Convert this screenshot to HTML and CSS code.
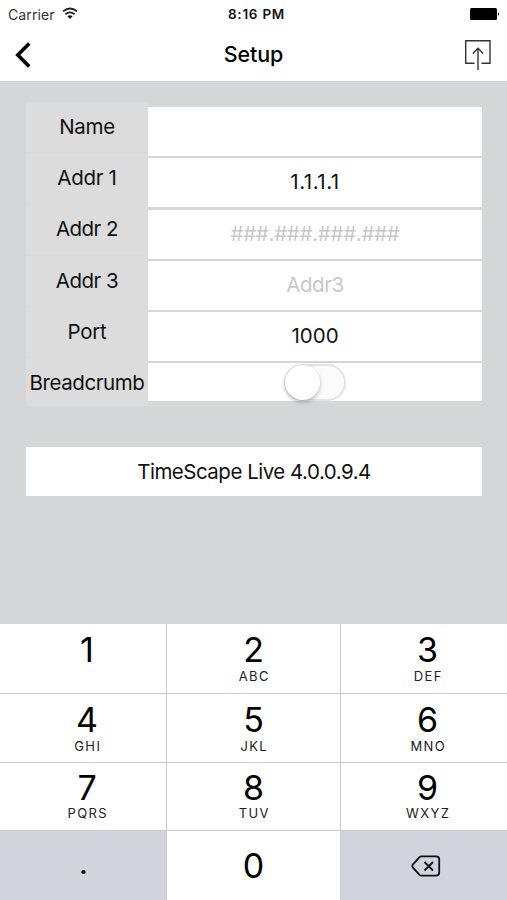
FILE: index.html
```html
<!DOCTYPE html>
<html lang="en">
<head>
<meta charset="utf-8">
<title>Setup</title>
<link rel="stylesheet" href="styles.css">
</head>
<body>
<div class="screen">
  <header class="top">
    <div class="status">
      <div class="carrier"><span>Carrier</span>
        <svg class="wifi" width="16" height="13" viewBox="0 0 16 13" fill="none" stroke="#222" stroke-width="1.8"><path d="M1 4.4Q8-1.4 15 4.4"/><path d="M3.4 7.3Q8 3.5 12.6 7.3"/><path d="M5.4 9.3Q8 7.3 10.6 9.3L8 12Z" fill="#111" stroke="none"/></svg>
      </div>
      <span class="time">8:16 PM</span>
      <svg class="battery" width="30" height="12" viewBox="0 0 30 12"><rect width="27" height="12" rx="1.5"/><path d="M28 4q2 2 0 4z"/></svg>
    </div>
    <nav class="nav">
      <svg class="back" width="16" height="26" viewBox="0 0 16 26" fill="none" stroke="#000" stroke-width="3.6"><path d="M14.2 1.5L2.8 13L14.2 24.5"/></svg>
      <h1>Setup</h1>
      <svg class="share" width="28" height="32" viewBox="0 0 28 32" fill="none" stroke="#333" stroke-width="1.4"><path d="M10.5 24.2H1.7V1.7H26V24.2H17.5"/><path d="M14 31V9M8.8 14.5L14 9.3L19.2 14.5"/></svg>
    </nav>
  </header>
  <main class="content">
    <div class="form">
      <div class="labels">
        <label>Name</label><label>Addr 1</label><label class="tight">Addr 2</label><label class="tight">Addr 3</label><label>Port</label><label class="wide">Breadcrumb</label>
      </div>
      <div class="fields">
        <div class="field"></div>
        <div class="field"><span class="ip">1.1.1.1</span></div>
        <div class="field hint"><span class="mask">###.###.###.###</span></div>
        <div class="field hint"><span class="addr">Addr3</span></div>
        <div class="field"><span class="port">1000</span></div>
        <div class="field last"><span class="switch"><span class="knob"></span></span></div>
      </div>
    </div>
    <div class="version"><span>TimeScape Live 4.0.0.9.4</span></div>
  </main>
  <div class="keypad">
    <div class="key left"><b>1</b></div>
    <div class="key"><b>2</b><small>ABC</small></div>
    <div class="key right"><b>3</b><small>DEF</small></div>
    <div class="key left"><b>4</b><small>GHI</small></div>
    <div class="key"><b>5</b><small>JKL</small></div>
    <div class="key right"><b>6</b><small>MNO</small></div>
    <div class="key left low"><b>7</b><small>PQRS</small></div>
    <div class="key low"><b>8</b><small>TUV</small></div>
    <div class="key right low"><b>9</b><small>WXYZ</small></div>
    <div class="key fn"><b class="dot">.</b></div>
    <div class="key zero"><b>0</b></div>
    <div class="key fn del"><svg class="erase" width="30" height="22" viewBox="0 0 30 22" fill="none" stroke="#111" stroke-width="1.8"><path d="M10.5 1.3H25Q28.2 1.3 28.2 4.5V17.5Q28.2 20.7 25 20.7H10.5Q9.4 20.7 8.5 19.8L1.8 12.4Q.8 11 1.8 9.6L8.5 2.2Q9.4 1.3 10.5 1.3Z"/><path d="M13.5 7L22 15.5M22 7L13.5 15.5"/></svg></div>
  </div>
</div>
</body>
</html>
```
FILE: styles.css
```css
* { box-sizing: border-box; }
body { margin: 0; font-family: Inter, "Liberation Sans", sans-serif; color: #111; }
.screen { width: 507px; height: 900px; display: flex; flex-direction: column; background: #d4d6d8; overflow: hidden; }
.top { height: 82px; background: #fff; border-bottom: 1px solid #d0d2d4; }
.status { height: 28px; display: grid; grid-template-columns: 1fr auto 1fr; align-items: center; padding: 0 7px 0 8px; font-size: 14px; }
.carrier { display: flex; align-items: center; gap: 7px; color: #333; letter-spacing: .1px; }
.wifi { margin-bottom: 2px; }
.time { font-weight: 600; font-size: 13.5px; padding-left: 5px; letter-spacing: .75px; }
.battery { justify-self: end; margin-bottom: 1px; }
.nav { height: 53px; display: grid; grid-template-columns: 1fr auto 1fr; align-items: center; padding: 0 15px; }
.share { justify-self: end; }
h1 { margin: 0; font-size: 21.5px; line-height: 53px; font-weight: 500; letter-spacing: -.1px; color: #000; }
.content { height: 542px; padding: 20px 25px 0 26px; font-size: 20.5px; }
.form { display: flex; }
.labels { width: 122px; height: 304px; display: grid; grid-template-rows: repeat(6, 51.2px); background: #dcdcdc; border-radius: 3px 0 0 3px; overflow: hidden; }
label { display: flex; justify-content: center; line-height: 49px; border-bottom: 1px solid #d8d9d9; letter-spacing: -.3px; white-space: nowrap; }
.tight { letter-spacing: -.5px; }
.wide { letter-spacing: -.4px; }
.fields { flex: 1; padding-top: 5px; display: grid; grid-template-rows: repeat(5, 49px) 38px; row-gap: 2.3px; }
.field { background: #fff; display: flex; align-items: center; justify-content: center; padding-bottom: 2px; }
.last { padding-bottom: 0; }
.hint { color: #c8c8cb; }
.mask { letter-spacing: -.3px; }
.addr { letter-spacing: -.4px; }
.ip { letter-spacing: .5px; }
.switch { width: 62px; height: 37px; border: 2px solid #e3e3e3; border-radius: 19px; background: #fbfbfb; }
.knob { display: block; width: 35px; height: 35px; margin: -1px 0 0 -1px; border-radius: 50%; background: #fff; box-shadow: 0 2px 4px #0004; }
.version { margin-top: 41px; height: 49px; line-height: 49px; background: #fff; text-align: center; letter-spacing: -.5px; }
.keypad { height: 276px; display: grid; grid-template-columns: 166px 173px 166px; grid-template-rows: 69px 68px 67px 69px; gap: 1px; background: #c9cbcd; color: #000; }
.key { background: #fff; display: flex; flex-direction: column; align-items: center; padding-top: 5px; }
.left { padding-left: 8px; }
.right { padding-left: 7px; }
.key b { font-weight: 400; font-size: 34px; line-height: 41px; }
.key small { font-size: 13px; line-height: 14px; letter-spacing: 1.4px; margin: -1px -1.5px 0 0; color: #222; }
.low { padding-top: 4px; }
.low small { margin-top: -2px; }
.fn { background: #d1d5db; justify-content: center; padding: 0; }
.key .dot { font-size: 31px; line-height: 31px; padding: 0 0 7px 1px; }
.del { padding: 1px 0 0 3px; }
.zero { justify-content: center; padding: 0; }
```
